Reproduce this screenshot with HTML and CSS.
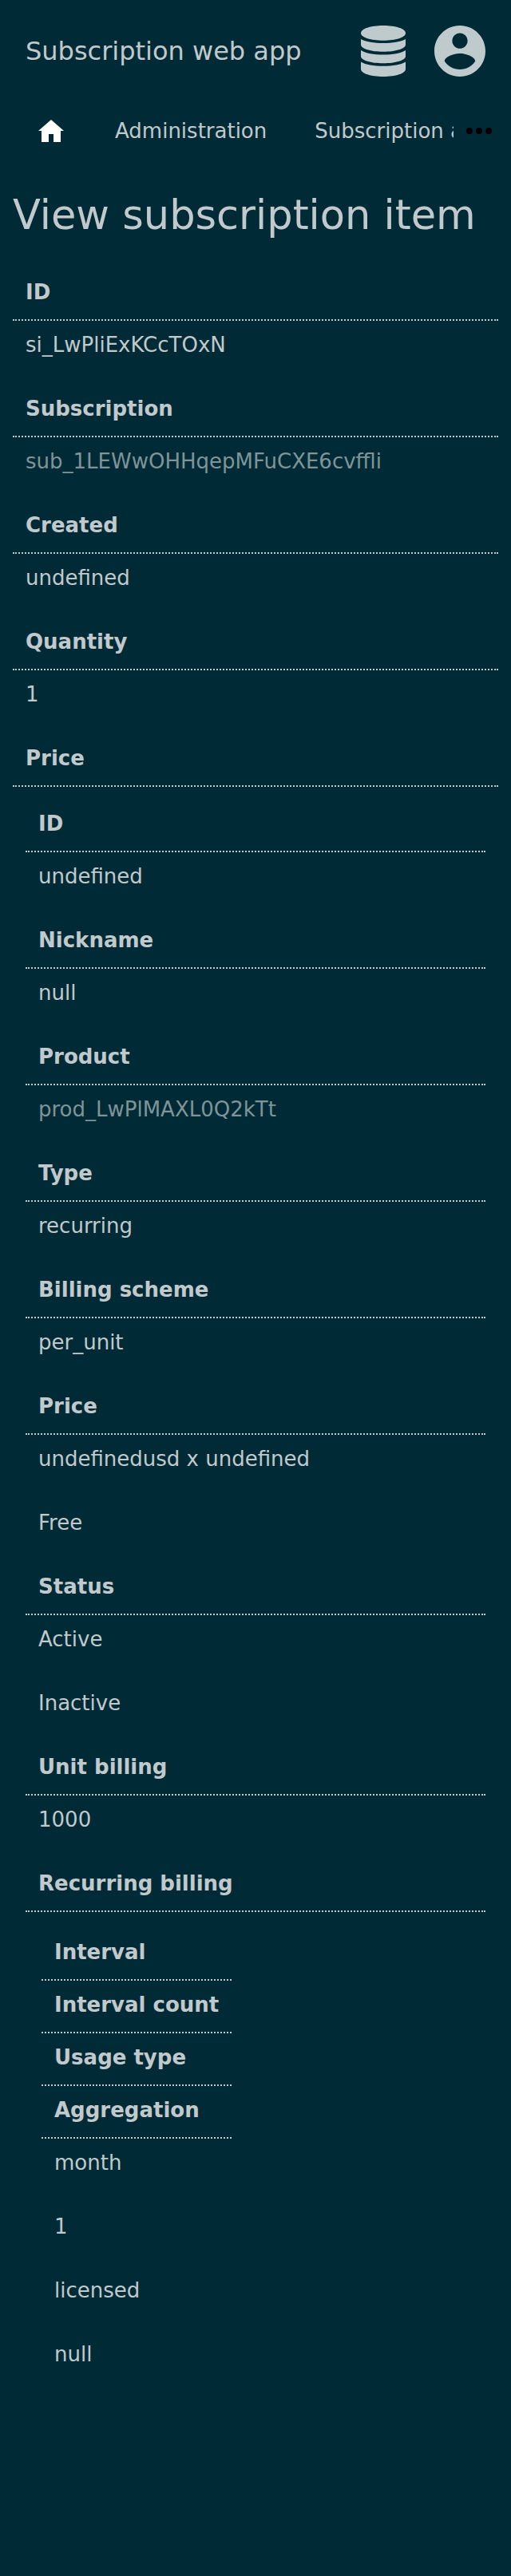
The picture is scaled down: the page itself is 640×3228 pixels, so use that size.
FILE: index.html
```html
<!DOCTYPE html>
<html lang="en">
<head>
<meta charset="utf-8">
<meta name="viewport" content="width=device-width, initial-scale=1">
<title>View subscription item</title>
<link rel="stylesheet" href="styles.css">
</head>
<body>
<header class="header">
  <a class="brand" href="#">Subscription web app</a>
  <div class="menus">
    <button class="menu-button" type="button" aria-label="Administrator menu">
      <svg class="icon-database" viewBox="0 0 56 64" aria-hidden="true"><path d="M28 0C43.500 0 56 4 56 9.500S43.500 18.700 28 18.700 0 15 0 9.500 12.500 0 28 0z"/><path d="M0 17C6 20.500 16 22 28 22S50 20.500 56 17V24C56 29 43.500 32.800 28 32.800S0 29 0 24z"/><path d="M0 31C6 34.800 16 36.500 28 36.500S50 34.800 56 31V38.500C56 43.500 43.500 47.300 28 47.300S0 43.500 0 38.500z"/><path d="M0 45.500C6 49.300 16 50.800 28 50.800S50 49.300 56 45.500V54.500C56 60 43.500 64 28 64S0 60 0 54.500z"/></svg>
    </button>
    <button class="menu-button" type="button" aria-label="Account menu">
      <svg class="icon-account" viewBox="2 2 20 20" aria-hidden="true"><path d="M12 2C6.480 2 2 6.480 2 12s4.480 10 10 10 10-4.480 10-10S17.520 2 12 2zm0 3c1.660 0 3 1.340 3 3s-1.340 3-3 3-3-1.340-3-3 1.340-3 3-3zm0 14.200c-2.500 0-4.710-1.280-6-3.220.030-1.990 4-3.080 6-3.080 1.990 0 5.970 1.090 6 3.080-1.290 1.940-3.500 3.220-6 3.220z"/></svg>
    </button>
  </div>
</header>
<nav class="navbar">
  <div class="nav-links">
    <a class="nav-link nav-home" href="#" aria-label="Home"><svg class="icon-home" viewBox="0 0 32 28" aria-hidden="true"><path d="M16 0 32 14H28V28H19V18H13V28H4V14H0z"/></svg></a>
    <a class="nav-link" href="#">Administration</a>
    <a class="nav-link" href="#">Subscription administration</a>
  </div>
  <button class="more" type="button" aria-label="More">
    <svg class="icon-more" viewBox="0 0 32 8" aria-hidden="true"><circle cx="4" cy="4" r="4"/><circle cx="16" cy="4" r="4"/><circle cx="28" cy="4" r="4"/></svg>
  </button>
</nav>
<main class="content">
  <h1 class="title">View subscription item</h1>
  <table class="data">
    <tr><th>ID</th></tr>
    <tr><td>si_LwPliExKCcTOxN</td></tr>
    <tr><th>Subscription</th></tr>
    <tr><td><a class="link" href="#">sub_1LEWwOHHqepMFuCXE6cvffli</a></td></tr>
    <tr><th>Created</th></tr>
    <tr><td>undefined</td></tr>
    <tr><th>Quantity</th></tr>
    <tr><td>1</td></tr>
    <tr><th>Price</th></tr>
    <tr><td class="nested">
      <table class="data">
        <tr><th>ID</th></tr>
        <tr><td>undefined</td></tr>
        <tr><th>Nickname</th></tr>
        <tr><td>null</td></tr>
        <tr><th>Product</th></tr>
        <tr><td><a class="link" href="#">prod_LwPlMAXL0Q2kTt</a></td></tr>
        <tr><th>Type</th></tr>
        <tr><td>recurring</td></tr>
        <tr><th>Billing scheme</th></tr>
        <tr><td>per_unit</td></tr>
        <tr><th>Price</th></tr>
        <tr><td>undefinedusd x undefined</td></tr>
        <tr><td>Free</td></tr>
        <tr><th>Status</th></tr>
        <tr><td>Active</td></tr>
        <tr><td>Inactive</td></tr>
        <tr><th>Unit billing</th></tr>
        <tr><td>1000</td></tr>
        <tr><th>Recurring billing</th></tr>
        <tr><td class="nested-deep">
          <table class="data compact">
            <tr><th>Interval</th></tr>
            <tr><th>Interval count</th></tr>
            <tr><th>Usage type</th></tr>
            <tr><th>Aggregation</th></tr>
            <tr><td>month</td></tr>
            <tr><td>1</td></tr>
            <tr><td>licensed</td></tr>
            <tr><td>null</td></tr>
          </table>
        </td></tr>
      </table>
    </td></tr>
  </table>
</main>
</body>
</html>
```
FILE: styles.css
```css
* {
  box-sizing: border-box;
}

body {
  margin: 0;
  min-height: 100vh;
  background: #002b36;
  color: #c1c9cc;
  font-family: "DejaVu Sans", sans-serif;
  font-size: 26px;
  line-height: 26px;
}

a {
  color: inherit;
  text-decoration: none;
}

button {
  display: flex;
  padding: 0;
  border: 0;
  background: none;
  color: inherit;
  cursor: pointer;
}

svg {
  display: block;
  fill: currentColor;
}

.header {
  display: flex;
  justify-content: space-between;
  align-items: center;
  padding: 32px 32px 16px;
}

.brand {
  font-size: 32px;
  line-height: 32px;
}

.menus {
  display: flex;
  gap: 36px;
  color: #bfcacd;
}

.icon-database {
  width: 56px;
  height: 64px;
}

.icon-account {
  width: 64px;
  height: 64px;
}

.navbar {
  display: flex;
  align-items: center;
  height: 104px;
  padding: 0 8px 0 16px;
}

.nav-links {
  display: flex;
  flex: 1;
  gap: 28px;
  min-width: 0;
  overflow: hidden;
}

.nav-link {
  display: flex;
  flex: none;
  align-items: center;
  height: 64px;
  padding-left: 32px;
  white-space: nowrap;
}

.nav-home {
  width: 68px;
}

.icon-home {
  width: 32px;
  height: 28px;
  color: #fff;
}

.more {
  flex: none;
  padding: 16px;
  color: #000;
}

.icon-more {
  width: 32px;
  height: 8px;
}

.content {
  padding: 0 16px;
}

.title {
  margin: 0;
  padding: 26px 0 38px;
  font-size: 51px;
  font-weight: normal;
  line-height: 56px;
}

.data {
  width: 100%;
  border-collapse: collapse;
}

.compact {
  width: auto;
}

th {
  padding: 17px 16px 21px;
  border-bottom: 2px dotted #c1c9cc;
  text-align: left;
}

td {
  padding: 17px 16px 37px;
}

.nested {
  padding: 16px;
}

.nested-deep {
  padding: 20px;
}

.link {
  color: #7f9499;
}
```
